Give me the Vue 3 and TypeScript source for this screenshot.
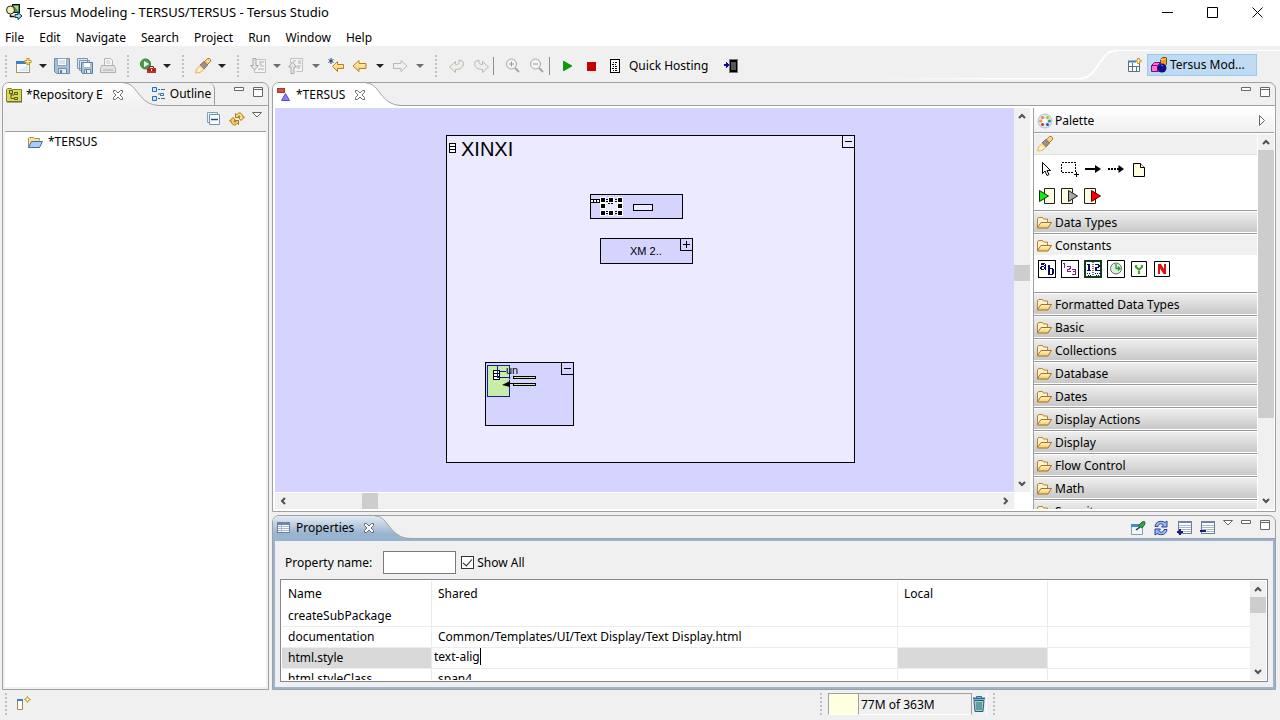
<script setup lang="ts">
import { ref } from 'vue'

interface ToolItem {
  kind: 'grip' | 'btn' | 'caret' | 'sep'
  icon?: string
  label?: string
  size?: 'wide'
  off?: boolean
}

const menus = ['File', 'Edit', 'Navigate', 'Search', 'Project', 'Run', 'Window', 'Help']

const tools: ToolItem[] = [
  { kind: 'grip' },
  { kind: 'btn', icon: 'new', label: 'New' },
  { kind: 'caret', label: 'New menu' },
  { kind: 'btn', icon: 'save', label: 'Save' },
  { kind: 'btn', icon: 'saveall', label: 'Save All' },
  { kind: 'btn', icon: 'print', label: 'Print' },
  { kind: 'grip' },
  { kind: 'btn', icon: 'runext', label: 'External Tools' },
  { kind: 'caret', label: 'External Tools menu' },
  { kind: 'grip' },
  { kind: 'btn', icon: 'torch', label: 'Search' },
  { kind: 'caret', label: 'Search menu' },
  { kind: 'grip' },
  { kind: 'btn', icon: 'next', label: 'Next Annotation' },
  { kind: 'caret', label: 'Next Annotation menu', off: true },
  { kind: 'btn', icon: 'prev', label: 'Previous Annotation' },
  { kind: 'caret', label: 'Previous Annotation menu', off: true, size: 'wide' },
  { kind: 'btn', icon: 'lastedit', label: 'Last Edit Location' },
  { kind: 'btn', icon: 'back', label: 'Back', size: 'wide' },
  { kind: 'caret', label: 'Back menu' },
  { kind: 'btn', icon: 'forward', label: 'Forward', size: 'wide' },
  { kind: 'caret', label: 'Forward menu', off: true },
  { kind: 'grip' },
  { kind: 'btn', icon: 'undo', label: 'Undo', size: 'wide' },
  { kind: 'btn', icon: 'redo', label: 'Redo' },
  { kind: 'sep' },
  { kind: 'btn', icon: 'zoomin', label: 'Zoom In', size: 'wide' },
  { kind: 'btn', icon: 'zoomout', label: 'Zoom Out' },
  { kind: 'sep' },
  { kind: 'btn', icon: 'play', label: 'Start Application' },
  { kind: 'btn', icon: 'stop', label: 'Stop Application', size: 'wide' },
]

const paletteTools = [
  ['arrow', 'marquee', 'flow', 'dashflow', 'note'],
  ['trigger', 'exit', 'errorexit'],
]
const constants = ['text', 'number', 'datetime', 'date', 'yes', 'no']
const drawers = ['Formatted Data Types', 'Basic', 'Collections', 'Database', 'Dates', 'Display Actions', 'Display', 'Flow Control', 'Math', 'Security']

const propertyName = ref('')
const showAll = ref(true)
const editing = ref('text-alig')
const rows = [
  { name: 'createSubPackage', shared: '', selected: false },
  { name: 'documentation', shared: 'Common/Templates/UI/Text Display/Text Display.html', selected: false },
  { name: 'html.style', shared: '', selected: true },
  { name: 'html.styleClass', shared: 'span4', selected: false },
]

const handles = [[328, 92], [336, 92], [345, 92], [328, 98], [345, 98], [328, 105], [336, 105], [345, 105]]
</script>

<template>
  <div class="window">
    <svg class="defs" aria-hidden="true">
      <defs>
        <linearGradient id="gold" x1="0" y1="0" x2="0" y2="1">
          <stop offset="0" stop-color="#fff8d0" /><stop offset="1" stop-color="#f5c75a" />
        </linearGradient>
        <linearGradient id="whiteTab" x1="0" y1="0" x2="0" y2="1">
          <stop offset="0" stop-color="#fff" /><stop offset="1" stop-color="#f0f0f0" />
        </linearGradient>
        <linearGradient id="blueTab" x1="0" y1="0" x2="0" y2="1">
          <stop offset="0" stop-color="#e3eaf3" /><stop offset="0.75" stop-color="#99b4d1" /><stop offset="1" stop-color="#99b4d1" />
        </linearGradient>
        <linearGradient id="fadeLine" x1="0" y1="0" x2="1" y2="0">
          <stop offset="0" stop-color="#f0f0f0" /><stop offset="0.6" stop-color="#fff" />
        </linearGradient>
      </defs>
      <symbol id="i-app" viewBox="0 0 16 16">
        <rect x="6.500" y="0.500" width="7" height="8" fill="#4f8f4a" stroke="#111" />
        <path d="M8 2h4v5z" fill="#a9d49b" />
        <circle cx="4.500" cy="6" r="4" fill="#f3efb0" stroke="#222" />
        <path d="M4.500 10.500v2h4" fill="none" stroke="#111" stroke-width="1.500" />
        <path d="M9 10.500h3v-2l4 3.500-4 3.500v-2H9z" fill="#8fdfe6" stroke="#0a3a48" />
      </symbol>
      <symbol id="i-new" viewBox="0 0 16 16">
        <rect x="0.500" y="3.500" width="13" height="11" fill="#f4f9fd" stroke="#a89868" />
        <path d="M0 3h10v3H0z" fill="#3e7fc0" /><path d="M2 13L12 7v6z" fill="#d5e9f8" />
        <path d="M12 0v7M8.500 3.500h7" stroke="#c8951e" stroke-width="3" /><path d="M12 1v5M9.500 3.500h5" stroke="#fff6c8" />
      </symbol>
      <symbol id="i-save" viewBox="0 0 16 16">
        <path d="M.5.5h15v15h-13l-2-2z" fill="#a9bfd4" stroke="#6d8aa8" />
        <path d="M3.500.5h9v7h-9z" fill="#fbfcfe" stroke="#8ca5be" /><path d="M5 3h6M5 5h6" stroke="#b9c7d6" />
        <path d="M4.500 10.500h8v5h-8z" fill="#e4ecf4" stroke="#6d8aa8" /><path d="M6 12h2v3H6z" fill="#5d7c9d" />
      </symbol>
      <symbol id="i-saveall" viewBox="0 0 16 16">
        <path d="M.5.5h10v10h-10zM2.500 2.500h10v10h-10z" fill="#dfe8f1" stroke="#7c97b3" />
        <path d="M4.500 4.500h11v11h-10l-1-1z" fill="#a9bfd4" stroke="#5f7f9f" /><path d="M7 5h6v4H7z" fill="#fff" />
        <path d="M7.500 11.500h6v4h-6z" fill="#e9f0f6" stroke="#6d8aa8" /><path d="M9 12h1v3H9z" fill="#4a6a8a" />
      </symbol>
      <symbol id="i-print" viewBox="0 0 16 16">
        <path d="M4.500 7.500v-7h6l2 2v5" fill="#f8f8f8" stroke="#b5b5b5" /><path d="M6 3h4M6 5h5" stroke="#c8c8c8" />
        <path d="M1.500 7.500h13l1 3v4H.5v-4z" fill="#e2e2e2" stroke="#b0b0b0" /><path d="M3 12h10" stroke="#a8a8a8" />
      </symbol>
      <symbol id="i-runext" viewBox="0 0 16 16">
        <circle cx="5.500" cy="6" r="5" fill="#43a047" stroke="#2b7a35" /><path d="M4 3l5 3-5 3z" fill="#fff" />
        <path d="M9.500 10.500v-2h4v2" fill="none" stroke="#8c1b1b" /><rect x="7" y="10" width="9" height="5" fill="#c62f2f" /><path d="M7 12h9" stroke="#8c1b1b" /><path d="M11 11h1v2h-1z" fill="#fff" />
      </symbol>
      <symbol id="i-torch" viewBox="0 0 16 16">
        <path d="M9 4l3.500-3.500h2l1 1v2L12 7z" fill="#f6cf7a" stroke="#b0783a" />
        <path d="M5 7l4-3.500L12.500 7 9 11z" fill="#9b8f94" stroke="#8a6a50" />
        <path d="M5 7.500L9 11.500 5 14.500l-4.500.5 1-4z" fill="#ffe9a8" stroke="#e3b769" /><path d="M4 10l2 2-3 2z" fill="#fffbe8" /><path d="M12.500 2.500l1 1" stroke="#fff" />
      </symbol>
      <symbol id="i-next" viewBox="0 0 16 16">
        <path d="M6.500 1.500h9v13h-11v-4" fill="#f4f4f4" stroke="#c0c0c0" /><path d="M9 4h5M9 6h3M10 8h4M8 11h6" stroke="#a8adb5" />
        <path d="M3 .5h3v7h2.500l-4 4.500-4-4.500H3z" fill="#e6e6e2" stroke="#a8a8a8" />
      </symbol>
      <symbol id="i-prev" viewBox="0 0 16 16">
        <path d="M2.500 5v-4.500h12v13h-6" fill="#f4f4f4" stroke="#c0c0c0" /><path d="M5 3h3M10 3h3M10 5h3M9 8h4M9 10h3" stroke="#a8adb5" />
        <path d="M3 15.500h3V9h2.500l-4-5-4 5H3z" fill="#e6e6e2" stroke="#a8a8a8" />
      </symbol>
      <symbol id="i-lastedit" viewBox="0 0 16 16">
        <path d="M4.500 8.500l5-5v3h6v4h-6v3z" fill="url(#gold)" stroke="#b97f1a" />
        <path d="M3 0v6M.5 1.500l5 3M5.500 1.500l-5 3" stroke="#1d3f66" />
      </symbol>
      <symbol id="i-back" viewBox="0 0 16 16"><path d="M1 8l6-5.500v3h7v5H7v3z" fill="url(#gold)" stroke="#b97f1a" /></symbol>
      <symbol id="i-forward" viewBox="0 0 16 16"><path d="M15 8L9 2.500v3H1.500v5H9v3z" fill="#f0f0ee" stroke="#b9b9b9" /></symbol>
      <symbol id="i-undo" viewBox="0 0 16 16"><path d="M.5 9l6-5.500v3c3 0 4-1 3.500-4.500l4 1.500c1.500 5-1.500 8-7.500 8v3z" fill="#ededea" stroke="#b9b9b4" /></symbol>
      <symbol id="i-redo" viewBox="0 0 16 16"><path d="M15.500 9l-6-5.500v3c-3 0-4-1-3.500-4.500L2 3.500c-1.500 5 1.500 8 7.500 8v3z" fill="#ededea" stroke="#b9b9b4" /></symbol>
      <symbol id="i-zoomin" viewBox="0 0 16 16"><circle cx="6.500" cy="6" r="5" fill="#f5f5f5" stroke="#a6a6a6" /><path d="M4 6h5M6.500 3.500v5" stroke="#999" /><path d="M10 10l4 4" stroke="#a6a6a6" stroke-width="2" /></symbol>
      <symbol id="i-zoomout" viewBox="0 0 16 16"><circle cx="6.500" cy="6" r="5" fill="#f5f5f5" stroke="#a6a6a6" /><path d="M4 6h5" stroke="#999" /><path d="M10 10l4 4" stroke="#a6a6a6" stroke-width="2" /></symbol>
      <symbol id="i-play" viewBox="0 0 16 16"><path d="M3 3v10h1l8-4.500v-1L4 3z" fill="#0a9c0a" /></symbol>
      <symbol id="i-stop" viewBox="0 0 16 16"><path d="M3 4h9v9H3z" fill="#c80000" /></symbol>
      <symbol id="i-host" viewBox="0 0 16 16" shape-rendering="crispEdges"><rect x="3.500" y="1.500" width="9" height="13" fill="#fff" stroke="#000" /><path d="M6 4h1M8 4h2M5 6h2M8 6h1M6 8h1M8 8h2M5 10h2M8 10h2M6 12h1M8 12h2" transform="translate(0 .5)" stroke="#000" /></symbol>
      <symbol id="i-device" viewBox="0 0 16 16" shape-rendering="crispEdges"><path d="M1 6h2V4l3 3-3 3V8H1z" fill="#0b0ba0" /><path d="M6 1h9v14H6z" fill="#777" /><path d="M7 2h7v12H7z" fill="#000" /><path d="M8 4h5v8H8z" fill="#555" /></symbol>
      <symbol id="i-persp" viewBox="0 0 16 16"><path d="M1.500 4.500h11v10h-11z" fill="#fff" stroke="#54708c" /><path d="M1 3.500h8v2H1z" fill="#3e7fc0" /><path d="M5.500 6v8M1 9.500h12M9.500 10v4" stroke="#54708c" /><path d="M11.500 1v6M8.500 4h6" stroke="#c8951e" stroke-width="2.500" /><path d="M11.500 2v4M9.500 4h4" stroke="#fff6c8" /></symbol>
      <symbol id="i-tersus" viewBox="0 0 16 16"><path d="M9.500 2.500l2-2h4v7l-2 2h-4z" fill="#f09a20" stroke="#7a4a10" /><path d="M9.500 2.500h4l2-2" fill="none" stroke="#ffe060" /><path d="M.5 8.500l3-3h6v7l-2 2h-7z" fill="#ff70d8" stroke="#801070" /><path d="M.5 8.500h6v6M6.500 8.500l3-3" fill="none" stroke="#801070" /><circle cx="11" cy="11" r="4.500" fill="#0a1090" /><path d="M10 8l2 1" stroke="#6080ff" /></symbol>
      <symbol id="i-repo" viewBox="0 0 16 16"><path d="M.5 14.500v-12l1-1h4l1 1h9v12z" fill="#d9d85c" stroke="#85842a" /><path d="M1 15h15V3" fill="none" stroke="#5f5e20" /><path d="M3.500 3.500h3v3h-3zM8.500 5.500h3v2h-3zM8.500 10.500h3v2h-3zM5 7v4.500h3M5 8h3" fill="none" stroke="#55561c" /></symbol>
      <symbol id="i-outline" viewBox="0 0 16 16"><path d="M1.500 1.500h4v4h-4zM1.500 10.500h4v4h-4z" fill="#cfe6fa" stroke="#2c6ca8" /><path d="M7 3.500h2M7 12.500h2M10 3.500h4M10 12.500h4M7 8h2" stroke="#2c6ca8" /><path d="M9.500 7.500h3v2h-3z" fill="#fff" stroke="#2c6ca8" /></symbol>
      <symbol id="i-x" viewBox="0 0 12 12"><path d="M1.500 1.500h2L6 4l2.500-2.500h2v2L8 6l2.500 2.500v2h-2L6 8l-2.500 2.500h-2v-2L4 6 1.500 3.500z" fill="#fff" stroke="#6b6b6b" /></symbol>
      <symbol id="i-tabtersus" viewBox="0 0 16 16"><path d="M1 1h8v5H1z" fill="#cc5046" /><path d="M1.500 1.500h7v4h-7z" fill="none" stroke="#a33a32" /><path d="M9.500 6.500l4 7h-8z" fill="#8d7cf6" stroke="#5a49d8" /></symbol>
      <symbol id="i-collapse" viewBox="0 0 16 16"><path d="M1.500 1.500h10v10h-10z" fill="#e8f3fb" stroke="#7fa3bd" /><path d="M3.500 3.500h10v10h-10z" fill="#fff" stroke="#6d93ae" /><path d="M5 8.500h7" stroke="#1d4d9a" stroke-width="1.500" /></symbol>
      <symbol id="i-link" viewBox="0 0 16 16"><path d="M6.500 6.500v-4l1.200 1.200C10 .5 13.500 2 14 6h1.500L12 9.500 9 6h2c-.5-1.500-1-1.500-1.800-.7l1 1.200z" fill="#fbdc88" stroke="#a87414" /><path d="M9.500 9.500v4l-1.200-1.200C6 15.500 2.500 14 2 10H.5L4 6.500 7 10H5c.5 1.500 1 1.500 1.800.7l-1-1.200z" fill="#f7cd60" stroke="#a87414" /></symbol>
      <symbol id="i-project" viewBox="0 0 16 16"><path d="M1.500 13.500v-9l1-1h4l1 1h5v2" fill="#f7e2a0" stroke="#b98f3c" /><path d="M1.500 13.500l3-6h11l-3 6z" fill="#a9cdf4" stroke="#3f6cb0" /></symbol>
      <symbol id="i-folder" viewBox="0 0 16 16"><path d="M1.500 12.500V4l1-1.500h4l1 1.500h4v3" fill="#fdf3cf" stroke="#b58432" /><path d="M1.500 12.500L5 7.500h10.500l-3.500 5.500H1.500z" fill="url(#gold)" stroke="#a86f22" /></symbol>
      <symbol id="i-palette" viewBox="0 0 16 16"><circle cx="8" cy="8" r="7" fill="#dce9f8" stroke="#a9c2e0" /><circle cx="5.500" cy="4.500" r="1.500" fill="#f08a20" /><circle cx="10.500" cy="4.500" r="1.500" fill="#c8b820" /><circle cx="3.500" cy="8" r="1.500" fill="#f0a020" /><circle cx="12.500" cy="8" r="1.500" fill="#30a040" /><circle cx="5.500" cy="11.500" r="1.500" fill="#e03030" /><circle cx="10.500" cy="11.500" r="1.500" fill="#3050d0" /><circle cx="8" cy="8" r="2" fill="#fff" /></symbol>
      <symbol id="i-arrow" viewBox="0 0 18 16"><path d="M4.500 1.500v11l2.500-2.500 2 4.500 2-1-2-4h3.500z" fill="#fff" stroke="#000" /></symbol>
      <symbol id="i-marquee" viewBox="0 0 18 16" shape-rendering="crispEdges"><path d="M.5 1.500h14v10H.5z" fill="none" stroke="#000" stroke-dasharray="2 1" /><path d="M12 11h6v5h-6z" fill="#fff" /><path d="M13 13.500h5M15.500 11v5" stroke="#000" /></symbol>
      <symbol id="i-flow" viewBox="0 0 18 16"><path d="M1 8h11" stroke="#000" stroke-width="2" /><path d="M11 4l6 4-6 4z" /></symbol>
      <symbol id="i-dashflow" viewBox="0 0 18 16"><path d="M1 8h11" stroke="#000" stroke-width="2" stroke-dasharray="2 1" /><path d="M11.500 4l5.500 4-5.500 4z" /></symbol>
      <symbol id="i-note" viewBox="0 0 18 16"><path d="M3.500 2.500h7l4 4v9h-11z" fill="#fffde0" stroke="#000" /><path d="M10.500 2.500v4h4" fill="#fff" stroke="#000" /></symbol>
      <symbol id="i-trigger" viewBox="0 0 18 16"><path d="M6.500.5h10v15h-10z" fill="#fffde0" stroke="#222" /><path d="M1.500 2.500v11l9-5.500z" fill="#0cf00c" stroke="#222" /></symbol>
      <symbol id="i-exit" viewBox="0 0 18 16"><path d="M.5.5h11v15H.5z" fill="#fffde0" stroke="#222" /><path d="M7.500 2.500v11l9-5.500z" fill="#a8a8a8" stroke="#222" /></symbol>
      <symbol id="i-errorexit" viewBox="0 0 18 16"><path d="M.5.5h11v15H.5z" fill="#fffde0" stroke="#222" /><path d="M7.500 2.500v11l9-5.500z" fill="#f00" stroke="#6a0000" /></symbol>
      <symbol id="i-text" viewBox="0 0 18 18" shape-rendering="crispEdges"><path d="M.5.5h17v17H.5z" fill="#fff" stroke="#000" /><path d="M3 3h4v2H3zM6 4h2v6H6zM3 6h4v1H4v2h3v1H3V9H2V7h1zM10 5h2v3h3v1h1v5h-1v1h-5zM12 9v5h2V9z" fill="#0b0b60" fill-rule="evenodd" /></symbol>
      <symbol id="i-number" viewBox="0 0 18 18" shape-rendering="crispEdges"><path d="M.5.5h17v17H.5z" fill="#fff" stroke="#000" /><path d="M2 3.500h1.500M3.500 3v5M6 6.500h3.500v2H8v1H6.500v1.500H10M11 9.500h3.500v5H11M12 11.500h3" fill="none" stroke="#8a1f8a" /></symbol>
      <symbol id="i-datetime" viewBox="0 0 18 18" shape-rendering="crispEdges"><path d="M1 1h16v16H1z" fill="#fff" stroke="#0d3d1d" stroke-width="2" /><path d="M9 2v14" stroke="#777" stroke-width="2" stroke-dasharray="1 1" /><path d="M3 4h3v6h1v1H3v-1h1V5H3zM11 4h4v1h1v2h-1v1h-2v2h3v1h-5V7h3V5h-3z" fill="#0b0b60" /><path d="M3 13.500h4M4 15.500h3M11 13.500h5M12 15.500h3" stroke="#0b0b60" stroke-dasharray="1 1" /></symbol>
      <symbol id="i-date" viewBox="0 0 18 18"><path d="M.5.5h17v17H.5z" fill="#fff" stroke="#000" /><circle cx="9" cy="8.500" r="5.500" fill="#e0f0e0" stroke="#607060" /><path d="M9 4v4.500h4M11 6.500l2 2-2 2" fill="none" stroke="#2f9a3a" stroke-width="1.300" /></symbol>
      <symbol id="i-yes" viewBox="0 0 18 18"><path d="M1.500 1.500h15v15h-15z" fill="#fff" stroke="#000" /><path d="M6 5v2l3 2.500L12 7V5M9 9v5" fill="none" stroke="#4aa02c" stroke-width="2.200" /></symbol>
      <symbol id="i-no" viewBox="0 0 18 18"><path d="M1.500 1.500h15v15h-15z" fill="#fff" stroke="#000" /><path d="M5 4h3l3 5V4h2v10h-2.500L7 8.500V14H5z" fill="#e01010" /></symbol>
      <symbol id="i-grid" viewBox="0 0 16 16" shape-rendering="crispEdges"><path d="M1.500 2.500h12v10h-12z" fill="#fff" stroke="#6c7f96" /><path d="M1 2h13v3H1z" fill="#6f86a8" /><path d="M2 6.500h11M2 8.500h11M2 10.500h11M5.500 5v7" stroke="#a9b8ca" /></symbol>
      <symbol id="i-pin" viewBox="0 0 16 16"><path d="M1.500 4.500h11v10h-11z" fill="#eef6fc" stroke="#8aa0a8" /><path d="M1 4h8v3H1z" fill="#3e8fc8" /><path d="M6 10l4-3" stroke="#333" stroke-width="1.500" /><path d="M8.500 5.500L12 2l2.500-.5.5 2.500L12 8z" fill="#35a046" stroke="#1c6b2a" /></symbol>
      <symbol id="i-refresh" viewBox="0 0 16 16"><path d="M2 6.500C2.500 1.500 8 0 12 2.500L14 1v6H8.500l2-2C8 3 5 4 5 6.500z" fill="#9db8f2" stroke="#2540a0" /><path d="M14 9.500C13.500 14.500 8 16 4 13.500L2 15V9h5.500l-2 2c2.500 2 5.500 1 5.500-1.500z" fill="#9db8f2" stroke="#2540a0" /></symbol>
      <symbol id="i-gridplus" viewBox="0 0 16 16" shape-rendering="crispEdges"><path d="M2.500 1.500h13v12h-13z" fill="#fff" stroke="#6c7f96" /><path d="M2 1h14v2H2z" fill="#6f86a8" /><path d="M3 5.500h12M3 7.500h12M3 9.500h12M3 11.500h12" stroke="#a9b8ca" /><path d="M1 12h6M4 9v6" stroke="#1d1d80" stroke-width="2" /></symbol>
      <symbol id="i-gridminus" viewBox="0 0 16 16" shape-rendering="crispEdges"><path d="M2.500 1.500h13v12h-13z" fill="#fff" stroke="#6c7f96" /><path d="M2 1h14v2H2z" fill="#6f86a8" /><path d="M3 5.500h12M3 7.500h12M3 9.500h12M3 11.500h12" stroke="#a9b8ca" /><path d="M1 11h6" stroke="#1d1d80" stroke-width="2" /></symbol>
      <symbol id="i-fastview" viewBox="0 0 16 16"><path d="M1.500 3.500h5v10h-5z" fill="#fff" stroke="#a08a50" /><path d="M1 3h6v2H1z" fill="#3e7fc0" /><path d="M11.500.5l1 2 2 1-2 1-1 2-1-2-2-1 2-1z" fill="#fff6c8" stroke="#b8901e" /></symbol>
      <symbol id="i-trash" viewBox="0 0 16 16"><path d="M5.500 2V.5h5V2" fill="none" stroke="#2f6f8f" /><path d="M2 2.500h12" stroke="#2f6f9f" stroke-width="2" /><path d="M3 4.500h10l-1 11H4z" fill="#a4d0c0" stroke="#1f5f8f" /><path d="M6 6v8M8 6v8M10 6v8" stroke="#1f6f7f" /></symbol>
    </svg>

    <header class="titlebar">
      <svg class="ic"><use href="#i-app" /></svg>
      <span class="title">Tersus Modeling - TERSUS/TERSUS - Tersus Studio</span>
      <div class="winbtns">
        <button aria-label="Minimize"><svg width="11" height="11"><path d="M0 5.500h11" stroke="#000" /></svg></button>
        <button aria-label="Maximize"><svg width="11" height="11"><path d="M.5.5h10v10H.5z" fill="none" stroke="#000" /></svg></button>
        <button aria-label="Close"><svg width="11" height="11"><path d="M.5.5l10 10M10.500.5l-10 10" stroke="#000" /></svg></button>
      </div>
    </header>

    <nav class="menubar">
      <button v-for="m in menus" :key="m">{{ m }}</button>
    </nav>

    <div class="toolbar">
      <div class="tools">
        <template v-for="(t, i) in tools" :key="i">
          <span v-if="t.kind === 'grip'" class="grip"></span>
          <span v-else-if="t.kind === 'sep'" class="sep"></span>
          <button v-else-if="t.kind === 'caret'" class="caret" :class="{ wide: t.size, off: t.off }" :aria-label="t.label"></button>
          <button v-else class="tool" :class="{ wide: t.size }" :aria-label="t.label">
            <svg class="ic"><use :href="'#i-' + t.icon" /></svg>
          </button>
        </template>
        <button class="labeled"><svg class="ic"><use href="#i-host" /></svg>Quick Hosting</button>
        <button class="tool" aria-label="Deploy"><svg class="ic"><use href="#i-device" /></svg></button>
      </div>
      <svg class="swoosh" width="240" height="36" aria-hidden="true">
        <path d="M0 32h204v1.500H0z" fill="url(#fadeLine)" />
        <path d="M203 32.500c10-.5 14-9 19-16s8-12 18-12" fill="none" stroke="#fff" stroke-width="2" />
      </svg>
      <div class="perspectives">
        <button class="tool" aria-label="Open Perspective"><svg class="ic"><use href="#i-persp" /></svg></button>
        <button class="persp"><svg class="ic"><use href="#i-tersus" /></svg>Tersus Mod...</button>
      </div>
    </div>

    <main class="work">
      <section class="panel repo">
        <div class="tabs">
          <div class="tab soft"><svg class="ic"><use href="#i-repo" /></svg><span>*Repository E</span>
            <button aria-label="Close"><svg class="x"><use href="#i-x" /></svg></button></div>
          <svg class="curve" width="36" height="24"><path d="M0 0c14 0 14 22.500 36 22.500V24H0z" fill="url(#whiteTab)" /><path d="M0 0c14 0 14 22.500 36 22.500" fill="none" stroke="#a0a0a0" /></svg>
          <button class="tab idle"><svg class="ic"><use href="#i-outline" /></svg>Outline</button>
          <div class="viewbtns">
            <button aria-label="Minimize"><svg width="11" height="11"><path d="M.5.5h9v3h-9z" fill="#fff" stroke="#666" /></svg></button>
            <button aria-label="Maximize"><svg width="11" height="11"><path d="M.5.5h9v9h-9zM.5 2.500h9" fill="#fff" stroke="#666" /></svg></button>
          </div>
        </div>
        <div class="viewbar">
          <button aria-label="Collapse All"><svg class="ic"><use href="#i-collapse" /></svg></button>
          <button aria-label="Link with Editor"><svg class="ic"><use href="#i-link" /></svg></button>
          <button aria-label="View Menu" class="vm"><svg width="10" height="6"><path d="M.5.5h9L5 5z" fill="#fff" stroke="#666" /></svg></button>
        </div>
        <ul class="tree"><li><svg class="ic"><use href="#i-project" /></svg>*TERSUS</li></ul>
      </section>

      <div class="right">
        <section class="panel editor">
          <div class="tabs">
            <div class="tab"><svg class="ic"><use href="#i-tabtersus" /></svg><span>*TERSUS</span>
              <button aria-label="Close"><svg class="x"><use href="#i-x" /></svg></button></div>
            <svg class="curve" width="36" height="24"><path d="M0 0c14 0 14 22.500 36 22.500V24H0z" fill="#fff" /><path d="M0 0c14 0 14 22.500 36 22.500" fill="none" stroke="#a0a0a0" /></svg>
            <div class="viewbtns">
              <button aria-label="Minimize"><svg width="11" height="11"><path d="M.5.5h9v3h-9z" fill="#fff" stroke="#666" /></svg></button>
              <button aria-label="Maximize"><svg width="11" height="11"><path d="M.5.5h9v9h-9zM.5 2.500h9" fill="#fff" stroke="#666" /></svg></button>
            </div>
          </div>
          <div class="editbody">
            <div class="canvas">
              <svg class="diagram" width="739" height="384" shape-rendering="crispEdges">
                <g stroke="#000" stroke-width="1">
                  <rect x="171.500" y="27.500" width="408" height="327" fill="#ebeaff" />
                  <path d="M567.500 27.500v12h12M570 33.500h7" fill="none" />
                  <path d="M174.500 35.500h6v9h-6zM174.500 38.500h6M174.500 41.500h6" fill="#fff" />
                  <rect x="315.500" y="86.500" width="92" height="24" fill="#d4d4ff" />
                  <path d="M315.500 91.500h9v3h-9zM318.500 91.500v3M321.500 91.500v3" fill="#fff" />
                  <rect x="358.500" y="96.500" width="19" height="6" fill="#ebeaff" />
                  <rect x="325.500" y="130.500" width="92" height="25" fill="#d4d4ff" />
                  <path d="M405.500 130.500v12h12M408 136.500h7M411.500 133v7" fill="none" />
                  <rect x="210.500" y="254.500" width="88" height="63" fill="#d4d4ff" />
                  <path d="M286.500 254.500v12h12M289 260.500h7" fill="none" />
                </g>
                <rect x="327" y="91" width="19" height="15" fill="#ebeaff" />
                <path d="M331 91.500h11M331 93.500h11M333 95.500h6M331 103.500h11M331 105.500h11" stroke="#000" stroke-dasharray="2 1" />
                <g v-for="(h, i) in handles" :key="i">
                  <rect :x="h[0] - 3" :y="h[1] - 3" width="6" height="6" fill="#fff" />
                  <rect :x="h[0] - 2" :y="h[1] - 2" width="4" height="4" fill="#000" />
                </g>
                <rect x="212.500" y="257.500" width="22" height="31" fill="#c8ecaa" stroke="#10209c" />
                <path d="M218.500 262.500h6v9h-6zM218.500 265.500h6M218.500 268.500h6" fill="#fff" stroke="#000" />
                <path d="M222.500 258v11.500h12M225 263.500h6" fill="none" stroke="#10209c" />
                <path d="M238.500 268.500h22v2h-22zM238.500 275.500h22v2h-22z" fill="#c8ecaa" stroke="#000" />
                <path d="M227 277l8-4v6z" shape-rendering="auto" /><path d="M233 275.500h6" stroke="#000" /><path d="M232 273l7-6" stroke="#bbb" stroke-dasharray="1 1" />
                <text x="186" y="48" class="t-lg">XINXI</text>
                <text x="355" y="147" class="t-sm">XM 2..</text>
                <text x="231" y="266" class="t-sm">un</text>
              </svg>
            </div>
            <div class="sb v">
              <button aria-label="Scroll up"><svg width="8" height="6"><path d="M1 5l3-3 3 3" /></svg></button>
              <div class="track"><i class="thumb mid"></i></div>
              <button aria-label="Scroll down"><svg width="8" height="6"><path d="M1 1l3 3 3-3" /></svg></button>
            </div>
            <div class="sb h">
              <button aria-label="Scroll left"><svg width="6" height="8"><path d="M5 1L2 4l3 3" /></svg></button>
              <div class="track"><i class="thumb side"></i></div>
              <button aria-label="Scroll right"><svg width="6" height="8"><path d="M1 1l3 3-3 3" /></svg></button>
            </div>
            <aside class="palette">
              <div class="pal-head"><svg class="ic"><use href="#i-palette" /></svg>Palette
                <button aria-label="Hide Palette"><svg width="6" height="11"><path d="M.5.5v10l5-5z" fill="#fff" stroke="#666" /></svg></button></div>
              <div class="pal-body">
                <div class="pal-list">
                  <div class="pal-torch"><svg class="ic"><use href="#i-torch" /></svg></div>
                  <div class="pal-tools">
                    <div v-for="(r, i) in paletteTools" :key="i" class="pal-row">
                      <button v-for="t in r" :key="t" :aria-label="t"><svg width="18" height="16"><use :href="'#i-' + t" /></svg></button>
                    </div>
                  </div>
                  <button class="drawer"><svg class="ic"><use href="#i-folder" /></svg>Data Types</button>
                  <button class="drawer open"><svg class="ic"><use href="#i-folder" /></svg>Constants</button>
                  <div class="pal-consts">
                    <button v-for="c in constants" :key="c" :aria-label="c"><svg width="18" height="18"><use :href="'#i-' + c" /></svg></button>
                  </div>
                  <button v-for="d in drawers" :key="d" class="drawer"><svg class="ic"><use href="#i-folder" /></svg>{{ d }}</button>
                </div>
                <div class="sb v">
                  <button aria-label="Scroll up"><svg width="8" height="6"><path d="M1 5l3-3 3 3" /></svg></button>
                  <div class="track"><i class="thumb long"></i></div>
                  <button aria-label="Scroll down"><svg width="8" height="6"><path d="M1 1l3 3 3-3" /></svg></button>
                </div>
              </div>
            </aside>
          </div>
        </section>

        <section class="panel props">
          <div class="tabs">
            <div class="tab blue"><svg class="ic"><use href="#i-grid" /></svg><span>Properties</span>
              <button aria-label="Close"><svg class="x"><use href="#i-x" /></svg></button></div>
            <svg class="curve" width="36" height="24"><path d="M0 0c14 0 14 22.500 36 22.500V24H0z" fill="url(#blueTab)" /><path d="M0 0c14 0 14 22.500 36 22.500" fill="none" stroke="#a0a0a0" /></svg>
            <div class="propbtns">
              <button v-for="n in ['pin', 'refresh', 'gridplus', 'gridminus']" :key="n" :aria-label="n"><svg class="ic"><use :href="'#i-' + n" /></svg></button>
            </div>
            <div class="viewbtns">
              <button aria-label="View Menu"><svg width="10" height="6"><path d="M.5.5h9L5 5z" fill="#fff" stroke="#666" /></svg></button>
              <button aria-label="Minimize"><svg width="11" height="11"><path d="M.5.5h9v3h-9z" fill="#fff" stroke="#666" /></svg></button>
              <button aria-label="Maximize"><svg width="11" height="11"><path d="M.5.5h9v9h-9zM.5 2.500h9" fill="#fff" stroke="#666" /></svg></button>
            </div>
          </div>
          <div class="propbody">
            <div class="filter">
              <label for="pname">Property name:</label>
              <input id="pname" v-model="propertyName" type="text" />
              <label class="check"><input v-model="showAll" type="checkbox" />Show All</label>
            </div>
            <div class="tablebox">
              <div class="tablewrap">
                <table>
                  <colgroup><col class="c1" /><col class="c2" /><col class="c3" /><col /></colgroup>
                  <thead><tr><th>Name</th><th>Shared</th><th>Local</th><th></th></tr></thead>
                  <tbody>
                    <tr v-for="r in rows" :key="r.name" :class="{ sel: r.selected }">
                      <td>{{ r.name }}</td>
                      <td v-if="r.selected" class="edit"><div><input v-model="editing" type="text" aria-label="html.style" /><i></i></div></td>
                      <td v-else>{{ r.shared }}</td>
                      <td></td>
                      <td></td>
                    </tr>
                  </tbody>
                </table>
              </div>
              <div class="sb v">
                <button aria-label="Scroll up"><svg width="8" height="6"><path d="M1 5l3-3 3 3" /></svg></button>
                <div class="track"><i class="thumb"></i></div>
                <button aria-label="Scroll down"><svg width="8" height="6"><path d="M1 1l3 3 3-3" /></svg></button>
              </div>
            </div>
          </div>
        </section>
      </div>
    </main>

    <footer class="status">
      <span class="grip"></span>
      <button class="tool" aria-label="Show View"><svg class="ic"><use href="#i-fastview" /></svg></button>
      <div class="heap">
        <span class="grip"></span>
        <span class="used"></span>
        <span class="mem">77M of 363M</span>
        <button aria-label="Run Garbage Collector"><svg class="ic"><use href="#i-trash" /></svg></button>
        <span class="grip"></span>
      </div>
    </footer>
  </div>
</template>

<style>
body { background: #f0f0f0; }
</style>

<style scoped>
* { box-sizing: border-box; }
.window { height: 100vh; min-height: 480px; display: flex; flex-direction: column; overflow: hidden; background: #f0f0f0; color: #000; font: 12px/16px "Noto Sans", "Open Sans", sans-serif; }
.defs { position: absolute; width: 0; height: 0; }
button { font: inherit; color: inherit; border: 0; padding: 0; margin: 0; background: none; display: flex; align-items: center; justify-content: center; flex: none; }
svg { display: block; flex: none; }
.ic { width: 16px; height: 16px; }
.x { width: 12px; height: 12px; }

.titlebar { height: 24px; flex: none; display: flex; align-items: center; background: #fff; padding-left: 6px; gap: 5px; }
.title { font-size: 13px; }
.titlebar .winbtns { margin-left: auto; display: flex; height: 24px; }
.winbtns button { width: 45px; }
.menubar { height: 22px; flex: none; display: flex; align-items: center; gap: 15px; padding: 6px 0 0 5px; background: #fff; }

.toolbar { height: 36px; flex: none; display: flex; }
.tools { display: flex; align-items: center; padding-top: 3px; }
.grip { width: 17px; height: 22px; flex: none; background: repeating-linear-gradient(#c0c0c0 0 2px, transparent 2px 4px) center / 2px 100% no-repeat; }
.tools .grip:first-child, .status > .grip { width: 12px; }
.tool { width: 23px; height: 23px; }
.tool.wide { width: 25px; }
.caret { width: 15px; height: 22px; }
.caret.wide { width: 17px; }
.caret::after { content: ""; border: 4px solid transparent; border-top-color: #222; border-bottom: 0; }
.caret.off::after { border-top-color: #707070; }
.sep { width: 1px; height: 18px; margin: 0 6px 0 1px; background: #909090; }
.labeled { gap: 6px; padding: 0 11px 0 3px; }
.swoosh { margin-left: auto; }
.perspectives { flex: none; display: flex; align-items: center; margin-top: 4px; border-top: 1px solid #fff; padding: 0 23px 3px 5px; height: 32px; gap: 0; }
.perspectives .tool { width: 24px; }
.persp { width: 110px; height: 22px; gap: 3px; justify-content: flex-start; padding-left: 3px; background: #bfdbf3; border: 1px solid #99c9ef; white-space: nowrap; }

.work { flex: 1; min-height: 0; display: grid; grid-template-columns: 267px minmax(0, 1fr); gap: 3px; padding: 0 4px 0 2px; }
.right { min-height: 0; min-width: 0; display: grid; grid-template-rows: minmax(0, 1fr) 175px; gap: 3px; }
.panel { min-width: 0; min-height: 0; border: 1px solid #a0a0a0; border-radius: 7px 7px 0 0; display: flex; flex-direction: column; overflow: hidden; }
.tabs { height: 23px; flex: none; display: flex; border-bottom: 1px solid #a0a0a0; }
.tab { height: 23px; flex: none; display: flex; align-items: center; background: #fff; padding-left: 3px; gap: 4px; }
.tab.soft { background: linear-gradient(#fff, #f0f0f0); }
.tab.blue { background: linear-gradient(#e3eaf3, #99b4d1 75%); }
.tab button { margin-left: 5px; }
.curve { margin-bottom: -1px; }
.tab.idle { height: 22px; margin-left: -9px; background: none; padding: 0 3px 0 0; gap: 3px; border-right: 1px solid #a0a0a0; border-radius: 0 6px 0 0; }
.viewbtns { margin-left: auto; display: flex; gap: 8px; align-items: flex-start; padding: 4px 4px 0 0; }

.viewbar { height: 26px; flex: none; margin: 0 2px; border-bottom: 1px solid #a0a0a0; display: flex; justify-content: flex-end; gap: 7px; align-items: center; padding-right: 4px; }
.viewbar .vm { align-self: flex-start; padding-top: 6px; }
.tree { flex: 1; margin: 0 2px 2px; padding: 2px 0 0 22px; list-style: none; background: #fff; }
.tree li { display: flex; align-items: center; gap: 5px; }

.editor { background: #f0f0f0; }
.editbody { flex: 1; min-height: 0; display: grid; grid-template: minmax(0, 1fr) 17px / minmax(0, 1fr) 17px 243px; padding: 2px 1px 2px 2px; background: #fff; }
.canvas { background: #d4d4ff; overflow: hidden; display: flex; justify-content: center; }
.t-lg { font: 20px "Liberation Sans", Arial, sans-serif; }
.t-sm { font: 11px "Liberation Sans", Arial, sans-serif; }

.sb { background: #f0f0f0; display: flex; }
.sb.v { width: 16px; flex-direction: column; flex: none; }
.sb.h { grid-row: 2; grid-column: 1; margin-top: 1px; }
.sb button { width: 16px; height: 16px; }
.sb path { fill: none; stroke: #505050; stroke-width: 2; }
.track { position: relative; flex: 1; }
.thumb { position: absolute; left: 0; top: 0; width: 16px; height: 16px; background: #cdcdcd; }
.thumb.mid { top: 40%; }
.thumb.side { left: 10%; }
.thumb.long { height: 78%; }

.palette { grid-column: 3; grid-row: 1 / 3; margin-left: 2px; border-left: 1px solid #a0a0a0; display: flex; flex-direction: column; min-height: 0; background: #fff; }
.pal-head { height: 25px; flex: none; display: flex; align-items: center; gap: 2px; padding: 1px 9px 0 3px; background: linear-gradient(#fff, #f0f0f0); border-bottom: 1px solid #a0a0a0; }
.pal-head button { margin-left: auto; }
.pal-body { flex: 1; min-height: 0; display: flex; padding-top: 1px; gap: 1px; }
.pal-list { flex: 1; overflow: hidden; }
.pal-torch { height: 21px; padding: 2px 3px; background: #f0f0f0; border-bottom: 1px solid #e0e0e0; }
.pal-tools { height: 55px; }
.pal-row, .pal-consts { display: flex; padding-left: 1px; }
.pal-row button { width: 23px; height: 27px; }
.pal-consts { height: 36px; }
.pal-consts button { width: 23px; height: 26px; }
.drawer { width: 100%; height: 23px; justify-content: flex-start; gap: 3px; padding: 1px 2px 0; border-top: 1px solid #989898; background: linear-gradient(#f0f0f0, #c6c6c6); box-shadow: inset 0 1px #fff, inset 0 -1px #fff; white-space: nowrap; }
.drawer.open { background: #f0f0f0; }

.propbtns { margin-left: auto; display: flex; align-items: center; gap: 7px; padding-top: 1px; }
.props .viewbtns { margin-left: 8px; }
.props { background: #f0f0f0; }
.propbody { flex: 1; min-height: 0; border: 2px solid #99b4d1; display: flex; flex-direction: column; padding: 10px 5px 5px; }
.filter { display: flex; align-items: center; padding-left: 5px; height: 23px; flex: none; margin-bottom: 5px; }
.filter > input { width: 73px; height: 23px; border: 1px solid #7a7a7a; background: #fff; margin: 0 5px 0 11px; padding: 0 3px; font: inherit; }
.check { display: flex; align-items: center; gap: 3px; }
.check input { appearance: none; width: 13px; height: 13px; margin: 0; border: 1px solid #333; background: #fff; display: flex; align-items: center; justify-content: center; }
.check input:checked::after { content: ""; width: 4px; height: 8px; margin-bottom: 2px; border: solid #222; border-width: 0 1px 1px 0; transform: rotate(42deg); }
.tablebox { flex: 1; min-height: 0; border: 1px solid #828790; background: #fff; display: flex; padding: 1px; }
.tablewrap { flex: 1; overflow: hidden; }
table { width: 100%; table-layout: fixed; border-collapse: separate; border-spacing: 0; }
.c1 { width: 150px; }
.c2 { width: 466px; }
.c3 { width: 150px; }
th, td { text-align: left; font-weight: 400; padding: 0 0 0 6px; border-right: 1px solid #ebebeb; white-space: nowrap; overflow: hidden; }
th:last-child, td:last-child { border-right: 0; }
th { height: 25px; }
td { height: 21px; border-bottom: 1px solid #ececec; }
.sel td:first-child, .sel td:nth-child(3) { background: #d9d9d9; }
.sel .edit { padding: 0 0 3px 2px; }
.edit div { display: flex; height: 17px; }
.edit input { field-sizing: content; border: 0; padding: 0; margin: 0; background: none; font: inherit; outline: 0; }
.edit i { width: 1px; height: 17px; background: #000; }

.status { height: 30px; flex: none; display: flex; align-items: center; padding-bottom: 2px; }
.heap { margin-left: auto; margin-right: 279px; display: flex; align-items: center; }
.heap .grip { width: 14px; }
.used { width: 31px; height: 22px; background: #ffffe1; border: 1px solid #a0a0a0; border-bottom-color: #fff; }
.mem { width: 113px; height: 22px; padding: 3px 0 0 2px; border: 1px solid #a0a0a0; border-left: 0; border-bottom-color: #fff; }
.heap button { width: 15px; height: 22px; border-right: 1px solid #fff; }
</style>
